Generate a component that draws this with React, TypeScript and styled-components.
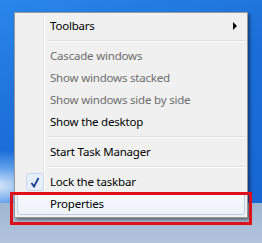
import styled, { createGlobalStyle } from "styled-components";

const GlobalStyle = createGlobalStyle`
  html, body {
    margin: 0;
    padding: 0;
    overflow: hidden;
  }
`;

type Item = {
  label: string;
  disabled?: boolean;
  checked?: boolean;
  submenu?: boolean;
  hover?: boolean;
};

const groups: Item[][] = [
  [{ label: "Toolbars", submenu: true }],
  [
    { label: "Cascade windows", disabled: true },
    { label: "Show windows stacked", disabled: true },
    { label: "Show windows side by side", disabled: true },
    { label: "Show the desktop" },
  ],
  [{ label: "Start Task Manager" }],
  [{ label: "Lock the taskbar", checked: true }, { label: "Properties", hover: true }],
];

export default function App() {
  return (
    <>
      <GlobalStyle />
      <Desktop>
        <Wallpaper>
          <Swoosh />
        </Wallpaper>
        <Taskbar />

        <Menu>
          {groups.map((group, gi) => (
            <div key={gi}>
              {gi > 0 && <Separator />}
              {group.map((item) => (
                <MenuItem key={item.label} $hover={item.hover}>
                  <IconCell>
                    {item.checked && (
                      <CheckBox>
                        <svg width="10" height="11" viewBox="0 0 10 11">
                          <path d="M1.5 6 L4 9.5 L8.5 1" fill="none" stroke="#1d3b8f" strokeWidth="1.8" />
                        </svg>
                      </CheckBox>
                    )}
                  </IconCell>
                  <Label $disabled={item.disabled}>{item.label}</Label>
                  {item.submenu && <Arrow />}
                </MenuItem>
              ))}
            </div>
          ))}
        </Menu>

        <Annotation />
      </Desktop>
    </>
  );
}

const Desktop = styled.div`
  position: relative;
  width: 262px;
  height: 243px;
  display: flex;
  flex-direction: column;
  font-family: "Noto Sans", "Open Sans", sans-serif;
`;

const Wallpaper = styled.div`
  position: relative;
  height: 203px;
  overflow: hidden;
  background: linear-gradient(160deg, #2a86ea 0%, #1c6fd8 45%, #1766d2 100%);
`;

const Swoosh = styled.div`
  position: absolute;
  left: -60px;
  top: 150px;
  width: 140px;
  height: 60px;
  border-radius: 50%;
  background: radial-gradient(ellipse at 40% 60%, rgba(255, 255, 255, 0.85) 0%, rgba(170, 215, 255, 0.5) 35%, rgba(40, 130, 230, 0) 70%);
`;

const Taskbar = styled.div`
  flex: 1;
  background: linear-gradient(180deg, #9fb5d1 0%, #a9bdd7 50%, #b2c4dc 100%);
`;

const Menu = styled.div`
  position: absolute;
  left: 14px;
  top: 12px;
  width: 228px;
  padding: 2px;
  background: #f0f0f0;
  border: 1px solid #979797;
  box-shadow: 2px 2px 3px rgba(0, 0, 0, 0.45);
  background-image: linear-gradient(90deg, transparent 28px, #e2e3e3 28px, #e2e3e3 29px, #ffffff 29px, #ffffff 30px, transparent 30px);
`;

const MenuItem = styled.div<{ $hover?: boolean }>`
  display: flex;
  align-items: center;
  height: 22px;
  box-sizing: border-box;
  border: 1px solid ${(p) => (p.$hover ? "#b8d0ec" : "transparent")};
  border-radius: 3px;
  background: ${(p) =>
    p.$hover ? "linear-gradient(180deg, #f6f9fd 0%, #eef3fa 100%)" : "transparent"};
`;

const IconCell = styled.div`
  width: 32px;
  display: flex;
  justify-content: center;
  align-items: center;
`;

const CheckBox = styled.div`
  width: 18px;
  height: 18px;
  box-sizing: border-box;
  display: flex;
  align-items: center;
  justify-content: center;
  border: 1px solid #c5d6ec;
  border-radius: 3px;
  background: #e6eef9;
  margin-left: 2px;
`;

const Label = styled.span<{ $disabled?: boolean }>`
  flex: 1;
  font-size: 11.5px;
  letter-spacing: -0.2px;
  color: ${(p) => (p.$disabled ? "#6d6d6d" : "#000")};
  padding-bottom: 1px;
  white-space: nowrap;
`;

const Arrow = styled.span`
  width: 0;
  height: 0;
  margin-right: 7px;
  border-top: 4px solid transparent;
  border-bottom: 4px solid transparent;
  border-left: 4px solid #000;
`;

const Separator = styled.div`
  height: 8px;
  margin-left: 30px;
  background: linear-gradient(180deg, transparent 3px, #e0e0e0 3px, #e0e0e0 4px, #ffffff 4px, #ffffff 5px, transparent 5px);
`;

const Annotation = styled.div`
  position: absolute;
  left: 10px;
  top: 192px;
  width: 242px;
  height: 33px;
  box-sizing: border-box;
  border: 3px solid #e0101a;
`;
